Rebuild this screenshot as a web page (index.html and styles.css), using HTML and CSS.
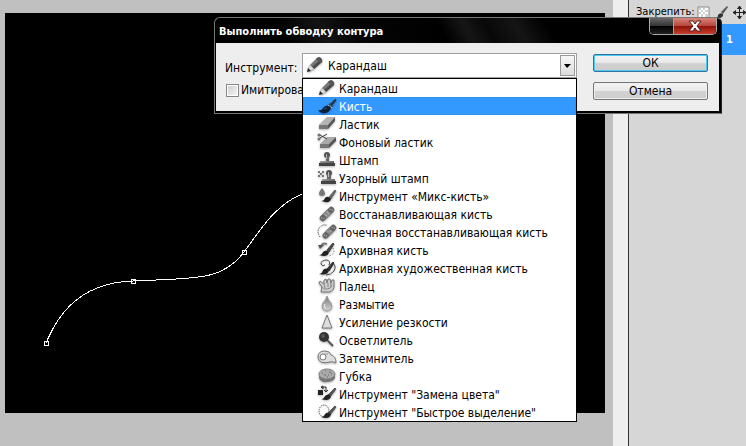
FILE: index.html
```
<!DOCTYPE html>
<html lang="ru">
<head>
  <meta charset="UTF-8">
  <meta name="viewport" content="width=device-width, initial-scale=1.0">
  <title>Выполнить обводку контура</title>
  <link rel="stylesheet" href="styles.css">
</head>
<body>
  <svg class="sprite" aria-hidden="true">
    <defs>
      <linearGradient id="steel" x1="0" y1="0" x2="1" y2="1">
        <stop offset="0" stop-color="#aaa"/><stop offset="1" stop-color="#444"/>
      </linearGradient>
      <linearGradient id="drop" x1="0" y1="0" x2="0" y2="1">
        <stop offset="0" stop-color="#777"/><stop offset="1" stop-color="#d4d4d4"/>
      </linearGradient>
    </defs>
    <symbol id="pencil" viewBox="0 0 20 18">
      <path d="M5 9l7-7h3l2 2v2l-8 7z" fill="#777"/>
      <path d="M7 11l8-7 2 1v1l-8 7z" fill="#4a4a4a"/>
      <path d="M12 2q2-2 4 0 2 2 1 4l-2 1-4-4z" fill="#555"/>
      <path d="M3 13l2-4 4 4-4 2z" fill="#ddd" stroke="#999" stroke-width=".5"/>
      <path d="M2 16l1-4 3 3z" fill="#222"/>
    </symbol>
    <symbol id="brush" viewBox="0 0 20 18">
      <path d="M12 8l6-6q2 0 1 2l-5 6z" fill="#234"/>
      <path d="M10 9l3-3 3 3-3 3z" fill="#345"/>
      <path d="M11 8l4 3" stroke="#bcd" fill="none"/>
      <path d="M1 13q4 1 5-2 2-3 6-2 3 2 1 4-3 4-8 3-3-1-4-3z" fill="#0c2138"/>
      <path d="M7 12l3-1" stroke="#36587c" fill="none"/>
    </symbol>
    <symbol id="eraser" viewBox="0 0 20 18">
      <path d="M10 2h8l-7 8H2z" fill="#b4b4b4"/>
      <path d="M2 10h9v4H2z" fill="#777"/>
      <path d="M11 10l7-8v4l-7 8z" fill="#555"/>
    </symbol>
    <symbol id="bg-eraser" viewBox="0 0 20 18">
      <path d="M10 4h9l-7 7H3z" fill="#aaa"/>
      <path d="M3 11h9v4H3z" fill="#777"/>
      <path d="M12 11l7-7v4l-7 7z" fill="#555"/>
      <path d="M3 2l7 4M3 5l7-4" stroke="#444" fill="none"/>
      <circle cx="2" cy="2" r="1" fill="#fff" stroke="#444"/>
      <circle cx="2" cy="6" r="1" fill="#fff" stroke="#444"/>
    </symbol>
    <symbol id="stamp" viewBox="0 0 20 18">
      <circle cx="10" cy="4" r="3" fill="#555"/>
      <path d="M9 5h3v5H9z" fill="#666"/>
      <path d="M3 10h14v3H3z" fill="url(#steel)"/>
      <path d="M2 12h16v3H2z" fill="#444"/>
      <path d="M9 3h1v5H9z" fill="#aaa"/>
    </symbol>
    <symbol id="pattern-stamp" viewBox="0 0 20 18">
      <circle cx="12" cy="4" r="3" fill="#555"/>
      <path d="M10 5h4v5h-4z" fill="#666"/>
      <path d="M5 10h13v3H5z" fill="url(#steel)"/>
      <path d="M4 12h15v3H4z" fill="#444"/>
      <path d="M11 3h1v5h-1z" fill="#bbb"/>
      <path d="M1 2h2v2H1zM5 2h2v2H5zM3 4h2v2H3zM1 6h2v2H1zM5 6h2v2H5z" fill="#777"/>
    </symbol>
    <symbol id="mixer" viewBox="0 0 20 18">
      <path d="M5 1q6 7 0 8-6-1 0-8z" fill="#777"/>
      <path d="M12 10l6-7 1 1-5 8z" fill="#666" stroke="#666"/>
      <path d="M4 14q3 0 4-3 3-3 6 1-1 5-10 2z" fill="#222"/>
    </symbol>
    <symbol id="heal" viewBox="0 0 20 18">
      <g transform="rotate(-45 10 9)">
        <rect x="1" y="6" width="18" height="6" rx="3" fill="#666"/>
        <rect x="7" y="6" width="6" height="6" fill="#888"/>
        <path d="M3 8h1M4 10h1M15 8h1M16 10h1M8 8h1M11 8h1M8 10h1M11 10h1" stroke="#ccc" fill="none"/>
      </g>
    </symbol>
    <symbol id="spot-heal" viewBox="0 0 20 18">
      <path d="M3 14q-5-8 3-12h4" fill="none" stroke="#333" stroke-dasharray="1 1"/>
      <g transform="rotate(-45 12 9)">
        <rect x="4" y="6" width="17" height="6" rx="3" fill="#666"/>
        <rect x="10" y="6" width="5" height="6" fill="#888"/>
        <path d="M6 8h1M7 10h1M17 8h1M18 10h1M11 8h1M13 10h1" stroke="#ccc" fill="none"/>
      </g>
    </symbol>
    <symbol id="history" viewBox="0 0 20 18">
      <path d="M10 3Q5 1 4 6" fill="none" stroke="#777" stroke-width="2"/>
      <path d="M1 4h6L3 8z" fill="#555"/>
      <path d="M16 7q3 6-4 8" fill="none" stroke="#555" stroke-dasharray="1 2"/>
      <path d="M10 9l6-7 1 1-5 8z" fill="#444" stroke="#444"/>
      <path d="M2 14q3 0 4-3 3-3 6 0-1 6-10 3z" fill="#222"/>
    </symbol>
    <symbol id="art-history" viewBox="0 0 20 18">
      <path d="M8 6Q5 8 4 5q0-4 6-4 4 1 2 5M15 4q5 2 2 8-3 4-8 4" fill="none" stroke="#444"/>
      <path d="M10 10l6-7 1 1-5 8z" fill="#333" stroke="#333"/>
      <path d="M2 15q3 0 4-4 3-3 6 0-1 6-10 4z" fill="#222"/>
    </symbol>
    <symbol id="smudge" viewBox="0 0 20 18">
      <path d="M4 15l1-5-3-4 1-2 4 3V3l2-1 1 4 1-4h2l1 4 1-3h2v7q-1 6-8 5z" fill="#ccc" stroke="#777"/>
      <path d="M7 7l1 4M11 6v4M14 6v4M5 10q2 3 5 2 4 0 5-4" fill="none" stroke="#888"/>
    </symbol>
    <symbol id="blur" viewBox="0 0 20 18">
      <path d="M10 1q1 4 4 7 3 7-4 8-7-1-4-8 3-3 4-7z" fill="url(#drop)" stroke="#999"/>
      <path d="M8 9q-2 3 1 4" fill="none" stroke="#eee"/>
    </symbol>
    <symbol id="sharpen" viewBox="0 0 20 18">
      <path d="M10 2l5 13H5z" fill="#ddd" stroke="#777"/>
    </symbol>
    <symbol id="dodge" viewBox="0 0 20 18">
      <path d="M10 9l6 6" stroke="#555" stroke-width="2"/>
      <circle cx="7" cy="6" r="5" fill="#333"/>
      <circle cx="6" cy="5" r="2" fill="#555"/>
    </symbol>
    <symbol id="burn" viewBox="0 0 20 18">
      <path d="M1 8q0-6 7-6 5 0 6 4 5 1 5 8-4-2-6-1-11 3-12-5z" fill="#ddd" stroke="#777"/>
      <circle cx="6" cy="8" r="3" fill="#fff" stroke="#777"/>
      <path d="M7 5h4" fill="none" stroke="#999"/>
    </symbol>
    <symbol id="sponge" viewBox="0 0 20 18">
      <path d="M2 7v4q2 5 8 4 6 0 8-4V7z" fill="#777"/>
      <ellipse cx="10" cy="7" rx="8" ry="5" fill="#aaa" stroke="#888"/>
      <path d="M5 6h1M8 4h1M12 5h2M7 8h2M11 8h1M14 7h1M10 10h1M6 12h1M10 13h2M15 11h1" stroke="#666" fill="none"/>
    </symbol>
    <symbol id="replace" viewBox="0 0 20 18">
      <path d="M1 5h5v5H1z" fill="#222"/>
      <path d="M5 2h4v5M4 2l2-1v3zM7 5l2 2 2-2" fill="none" stroke="#333"/>
      <path d="M11 10l7-7 1 1-6 8z" fill="#555" stroke="#555"/>
      <path d="M4 14q3 0 4-3 3-3 6 0-1 6-10 3z" fill="#222"/>
    </symbol>
    <symbol id="quick" viewBox="0 0 20 18">
      <ellipse cx="7" cy="8" rx="5" ry="6" fill="none" stroke="#333" stroke-dasharray="1 1"/>
      <path d="M11 10l7-7 1 1-6 8z" fill="#555" stroke="#555"/>
      <path d="M4 14q3 0 4-3 3-3 6 0-1 6-10 3z" fill="#222"/>
    </symbol>
  </svg>

  <div class="app">
    <main class="workspace">
      <svg class="document" viewBox="0 0 600 400" preserveAspectRatio="xMinYMin slice" aria-label="Контур">
        <path class="curve" d="M41 330C50 310 68 270 128 268C190 265 218 268 239 239C253 221 268 193 297 181"/>
        <g class="anchors">
          <path d="M39 328h5v5h-5zM40 329v3h3v-3z"/>
          <path d="M126 266h5v5h-5zM127 267v3h3v-3z"/>
          <path d="M237 237h5v5h-5zM238 238v3h3v-3z"/>
        </g>
      </svg>
    </main>
    <div class="scroll-track"></div>
    <aside class="layers">
      <div class="lock-bar">
        <span class="lock-label">Закрепить:</span>
        <svg class="lock-icon" viewBox="0 0 13 13">
          <path d="M1 1h11v11H1z" fill="#fff" stroke="#888"/>
          <path d="M2 2h2v2H2zM6 2h2v2H6zM4 4h2v2H4zM8 4h3v2H8zM2 6h2v2H2zM6 6h2v2H6zM4 8h2v3H4zM8 8h3v3H8z" fill="#ccd4cc"/>
        </svg>
        <svg class="lock-icon" viewBox="0 0 13 13">
          <path d="M6 6l6-6 1 1-5 7z" fill="#555"/>
          <path d="M0 12q3 0 3-3 2-3 5-1 1 5-8 4z" fill="#333"/>
        </svg>
        <svg class="lock-icon" viewBox="0 0 13 13">
          <path d="M6 2h1v9H6zM2 6h9v1H2z" fill="#222"/>
          <path d="M6 0h1l2 3H4zM6 13h1l2-3H4zM0 6v1l3 2V4zM13 6v1l-3 2V4z" fill="#222"/>
        </svg>
      </div>
      <div class="layer">1</div>
    </aside>
  </div>

  <form class="dialog" role="dialog" aria-labelledby="title">
    <header class="titlebar">
      <h1 class="title" id="title">Выполнить обводку контура</h1>
      <div class="window-buttons">
        <button class="window-button" type="button" aria-label="Свернуть"></button>
        <button class="window-button close" type="button" aria-label="Закрыть">
          <svg class="close-icon" viewBox="0 0 14 12"><path d="M1 1h4l2 3 2-3h4L9 6l4 5H9L7 8l-2 3H1l4-5z" fill="#fff" stroke="#522"/></svg>
        </button>
      </div>
    </header>
    <div class="dialog-body">
      <div class="fields">
        <div class="field">
          <label class="field-label" for="tool">Инструмент:</label>
          <div class="combo">
            <select class="combo-select" id="tool"><option>Карандаш</option></select>
            <svg class="icon combo-icon"><use href="#pencil"/></svg>
            <span class="combo-arrow"></span>
            <ul class="menu" role="listbox" aria-label="Инструмент">
              <li class="item" role="option"><svg class="icon"><use href="#pencil"/></svg>Карандаш</li>
              <li class="item active" role="option" aria-selected="true"><svg class="icon"><use href="#brush"/></svg>Кисть</li>
              <li class="item" role="option"><svg class="icon"><use href="#eraser"/></svg>Ластик</li>
              <li class="item" role="option"><svg class="icon"><use href="#bg-eraser"/></svg>Фоновый ластик</li>
              <li class="item" role="option"><svg class="icon"><use href="#stamp"/></svg>Штамп</li>
              <li class="item" role="option"><svg class="icon"><use href="#pattern-stamp"/></svg>Узорный штамп</li>
              <li class="item" role="option"><svg class="icon"><use href="#mixer"/></svg>Инструмент «Микс-кисть»</li>
              <li class="item" role="option"><svg class="icon"><use href="#heal"/></svg>Восстанавливающая кисть</li>
              <li class="item" role="option"><svg class="icon"><use href="#spot-heal"/></svg>Точечная восстанавливающая кисть</li>
              <li class="item" role="option"><svg class="icon"><use href="#history"/></svg>Архивная кисть</li>
              <li class="item" role="option"><svg class="icon"><use href="#art-history"/></svg>Архивная художественная кисть</li>
              <li class="item" role="option"><svg class="icon"><use href="#smudge"/></svg>Палец</li>
              <li class="item" role="option"><svg class="icon"><use href="#blur"/></svg>Размытие</li>
              <li class="item" role="option"><svg class="icon"><use href="#sharpen"/></svg>Усиление резкости</li>
              <li class="item" role="option"><svg class="icon"><use href="#dodge"/></svg>Осветлитель</li>
              <li class="item" role="option"><svg class="icon"><use href="#burn"/></svg>Затемнитель</li>
              <li class="item" role="option"><svg class="icon"><use href="#sponge"/></svg>Губка</li>
              <li class="item" role="option"><svg class="icon"><use href="#replace"/></svg>Инструмент "Замена цвета"</li>
              <li class="item" role="option"><svg class="icon"><use href="#quick"/></svg>Инструмент "Быстрое выделение"</li>
            </ul>
          </div>
        </div>
        <label class="check"><input class="check-box" type="checkbox">Имитировать</label>
      </div>
      <div class="actions">
        <button class="btn primary" type="submit">ОК</button>
        <button class="btn" type="button">Отмена</button>
      </div>
    </div>
  </form>
</body>
</html>
```

FILE: styles.css
```
* {box-sizing:border-box; margin:0; padding:0}
body {font-family:"DejaVu Sans Condensed", "DejaVu Sans", sans-serif; font-size:12px; line-height:20px; color:#000; background:#c0c0c0;}
button, select, input {font:inherit; color:inherit;}
ul {list-style:none}
.sprite {position:absolute; width:0; height:0;}

/* editor behind the dialog */
.app {display:flex; height:100vh; overflow:hidden;}
.workspace {flex:1; padding:13px 8px 33px 5px;}
.document {display:block; width:100%; height:100%; background:#000;}
.curve {fill:none; stroke:#fff; stroke-width:1; shape-rendering:crispEdges;}
.anchors {fill:#fff; fill-rule:evenodd; shape-rendering:crispEdges;}
.scroll-track {width:15px; background:#eee;}
.layers {width:118px; border-left:1px solid #333; background:#d6d6d6;}
.lock-bar {display:flex; align-items:center; gap:5px; height:24px; padding-left:7px;}
.lock-label {width:56px; font-size:11px; white-space:nowrap;}
.lock-icon {flex:none; width:13px; height:13px;}
.layer {height:31px; padding-left:97px; line-height:32px; font-size:11px; font-weight:bold; color:#fff; background:#39f;}

/* dialog */
.dialog {position:absolute; left:214px; top:17px; width:508px; border:1px solid #777; border-right-color:#222; border-radius:6px 6px 0 0; background:#000; padding:0 2px 2px 1px;}
.titlebar {display:flex; justify-content:space-between; height:25px; padding-left:3px; border-radius:5px 5px 0 0; background:linear-gradient(60deg, #000 14%, #141414 22%, #050505 28%, #000 45%, #161616 50%, #080808 54%, #151515 60%, #000 66%);}
.title {font-size:11px; line-height:27px; color:#fff;}
.window-buttons {display:flex; height:17px; margin-right:2px; border:1px solid #aaa; border-top:0; border-radius:0 0 5px 5px; overflow:hidden;}
.window-button {width:23px; border:0; background:linear-gradient(#666, #333 50%, #000 50%, #222);}
.close {display:flex; align-items:center; justify-content:center; width:43px; border-left:1px solid #b99; background:linear-gradient(#d8867c, #b6453a 50%, #8c1208 50%, #c8402c);}
.close-icon {width:14px; height:12px;}
.dialog-body {display:flex; justify-content:space-between; height:68px; padding:10px 11px 0 9px; background:#eee;}
.fields {display:flex; flex-direction:column; gap:2px;}
.field {display:flex; align-items:center;}
.field-label {width:77px; padding-top:4px;}
.combo {position:relative; width:275px; height:25px;}
.combo-select {display:block; width:100%; height:100%; padding:1px 0 0 25px; border:1px solid #a0a0a0; background:#fff; appearance:none;}
.combo-icon {position:absolute; left:3px; top:3px;}
.combo-arrow {position:absolute; right:2px; top:2px; width:15px; height:21px; border:1px solid #999; background:linear-gradient(#f6f6f6, #ddd); pointer-events:none;}
.combo-arrow::after {content:""; position:absolute; left:3px; top:8px; border:4px solid transparent; border-top-color:#000; border-bottom:0; border-left-width:3px;}
.check {display:flex; align-items:center; gap:2px; padding-left:1px;}
.check-box {width:13px; height:13px; border:1px solid #888; background:linear-gradient(135deg, #ccc, #f8f8f8); box-shadow:inset 0 0 0 1px #fff; appearance:none;}
.actions {display:flex; flex-direction:column; gap:10px; width:115px; padding-top:1px;}
.btn {height:18px; line-height:16px; border:1px solid #777; border-radius:2px; background:linear-gradient(#f4f4f4, #e8e8e8 50%, #d2d2d2 50%, #ccc); box-shadow:inset 0 0 0 1px #eee;}
.primary {border-color:#3272a4; box-shadow:inset 0 0 0 1px #4ccbee;}

/* opened tool list */
.menu {position:absolute; left:0; top:25px; z-index:1; width:100%; border:1px solid #000; background:#fff;}
.item {display:flex; align-items:flex-start; gap:2px; height:18px; padding-left:14px; white-space:nowrap;}
.active {color:#fff; background:#39f; outline:1px dotted #c60; outline-offset:-1px;}
.icon {flex:none; width:20px; height:18px; filter:drop-shadow(0 1px 1px rgba(0,0,0,.3));}
```
